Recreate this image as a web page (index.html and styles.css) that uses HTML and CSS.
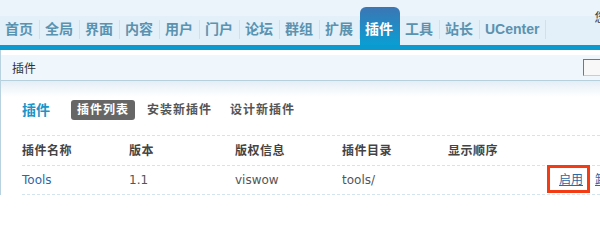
FILE: index.html
```html
<!DOCTYPE html>
<html lang="zh-CN">
<head>
<meta charset="utf-8">
<title>插件</title>
<link rel="stylesheet" href="styles.css">
</head>
<body>
<div class="page">
  <header class="topbar">
    <ul class="nav">
      <li class="nav-item"><a>首页</a></li>
      <li class="nav-item"><a>全局</a></li>
      <li class="nav-item"><a>界面</a></li>
      <li class="nav-item"><a>内容</a></li>
      <li class="nav-item"><a>用户</a></li>
      <li class="nav-item"><a>门户</a></li>
      <li class="nav-item"><a>论坛</a></li>
      <li class="nav-item"><a>群组</a></li>
      <li class="nav-item"><a>扩展</a></li>
      <li class="nav-item active"><a>插件</a></li>
      <li class="nav-item"><a>工具</a></li>
      <li class="nav-item"><a>站长</a></li>
      <li class="nav-item"><a>UCenter</a></li>
    </ul>
    <div class="userinfo">您好，admin [退出]</div>
  </header>
  <div class="main">
    <div class="crumb">
      <span>插件</span>
      <input class="search" type="text">
    </div>
    <div class="content">
      <div class="titlebar">
        <h3 class="title">插件</h3>
        <ul class="subtabs">
          <li class="subtab current"><a>插件列表</a></li>
          <li class="subtab"><a>安装新插件</a></li>
          <li class="subtab"><a>设计新插件</a></li>
        </ul>
      </div>
      <div class="table">
        <div class="row head">
          <div>插件名称</div>
          <div>版本</div>
          <div>版权信息</div>
          <div>插件目录</div>
          <div>显示顺序</div>
          <div></div>
        </div>
        <div class="row data">
          <div><a class="name">Tools</a></div>
          <div>1.1</div>
          <div>viswow</div>
          <div>tools/</div>
          <div></div>
          <div class="actions"><a class="act hl">启用</a><a class="act">卸载</a></div>
        </div>
      </div>
    </div>
  </div>
</div>
</body>
</html>
```
FILE: styles.css
```css
html, body {
  margin: 0;
  padding: 0;
  background: #fff;
}
body {
  overflow: hidden;
  font-family: "DejaVu Sans", "Noto Sans CJK SC", sans-serif;
  font-size: 12px;
  color: #444;
}
.page {
  width: 720px;
}
.topbar {
  display: flex;
  height: 45px;
  background: linear-gradient(#ecf4fb 0, #ecf4fb 16px, #e3eff9 16px, #e3eff9 45px);
  border-bottom: 5px solid #0b9ad0;
}
.nav {
  display: flex;
  align-items: flex-end;
  list-style: none;
  margin: 0;
  padding: 0;
  height: 45px;
}
.nav-item {
  padding: 4px 0 6px;
  font-family: "Liberation Sans", "Noto Sans CJK SC", sans-serif;
  font-size: 14px;
  font-weight: bold;
}
.nav-item a {
  display: block;
  padding: 0 6px 0 5px;
  border-right: 1px solid #d0e1ec;
  line-height: 19px;
  color: #5a93b0;
  white-space: nowrap;
}
.nav-item.active {
  padding-top: 13px;
  background: linear-gradient(#3b76b4, #0a9ed3);
  border-radius: 6px 6px 0 0;
}
.nav-item.active a {
  color: #fff;
  border-right-color: transparent;
}
.userinfo {
  margin-left: 48px;
  margin-top: 11px;
  line-height: 14px;
  font-size: 12px;
  color: #333;
  white-space: nowrap;
}
.main {
  border-left: 1px solid #b8d2df;
  padding-top: 5px;
  background: #fff;
}
.crumb {
  display: flex;
  align-items: center;
  height: 25px;
  padding-left: 11px;
  background: #eff7fc;
  border-bottom: 1px solid #b5cfdb;
  color: #333;
}
.search {
  margin: 0 17px 0 auto;
  width: 120px;
  height: 17px;
  box-sizing: border-box;
  padding: 0;
  border: 1px solid;
  border-color: #777 #ccc #ccc #777;
  background: #f8f8f8;
}
.content {
  padding: 19px 0 0 21px;
  background: linear-gradient(#e4eef6, #fff 16px) no-repeat;
}
.titlebar {
  display: flex;
  align-items: center;
  padding-bottom: 15px;
  border-bottom: 1px dashed #d3e4ef;
}
.title {
  margin: 0 21px 0 0;
  font-size: 14px;
  font-weight: bold;
  color: #1a95c9;
  line-height: 20px;
}
.subtabs {
  display: flex;
  gap: 6px;
  list-style: none;
  margin: 0;
  padding: 0;
}
.subtab a {
  display: block;
  padding: 0 6px;
  line-height: 20px;
  font-weight: bold;
  letter-spacing: 1px;
  color: #555;
  border-radius: 3px;
}
.subtab.current a {
  background: #666;
  color: #fff;
}
.row {
  display: grid;
  grid-template-columns: 107px 106px 107px 106px 107px auto;
  align-items: center;
  height: 29px;
  line-height: 16px;
  border-bottom: 1px dashed #d3e4ef;
  white-space: nowrap;
}
.row.head {
  font-weight: bold;
  color: #444;
  letter-spacing: 0.5px;
}
.row.data {
  height: 28px;
  color: #555;
}
.name {
  color: #2a68a6;
}
.actions {
  padding-left: 4px;
}
.act {
  display: inline-block;
  margin-right: 12px;
  color: #2a68a6;
  text-decoration: underline;
  line-height: 16px;
}
.hl {
  position: relative;
}
.hl::after {
  content: "";
  position: absolute;
  left: -12px;
  right: -7px;
  top: -7px;
  bottom: -5px;
  border: 3px solid #f23c14;
}
```
